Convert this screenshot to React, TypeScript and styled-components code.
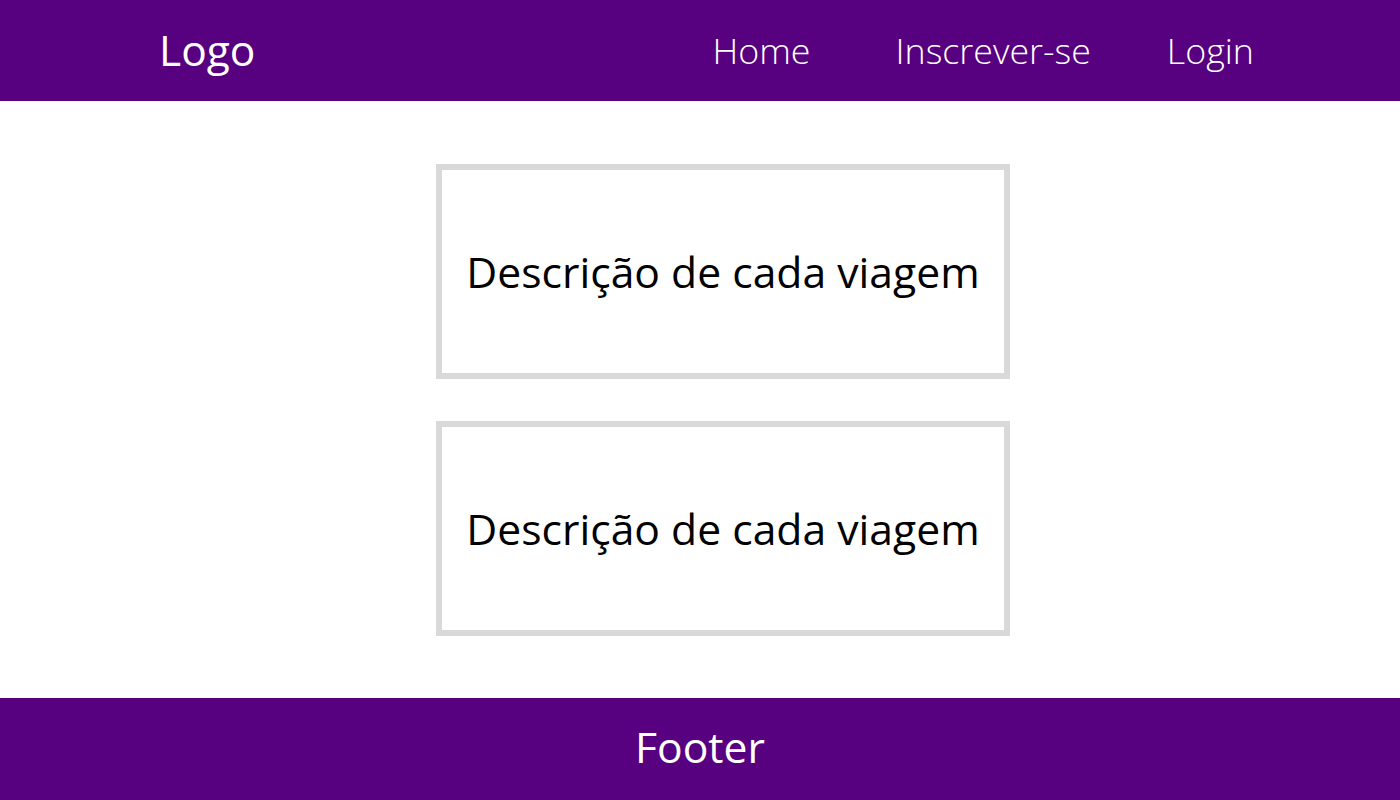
import React from "react";
import styled, { createGlobalStyle } from "styled-components";

const Global = createGlobalStyle`
  html, body { margin: 0; padding: 0; background: #fff; }
  body { font-family: "Open Sans", "Noto Sans", sans-serif; }
  * { box-sizing: border-box; }
`;

const Page = styled.div`
  width: 1400px;
  height: 800px;
  display: flex;
  flex-direction: column;
`;

const Header = styled.header`
  height: 101px;
  background: #570080;
  display: flex;
  align-items: center;
  justify-content: space-between;
  padding: 0 146px 0 159px;
  color: #fff;
`;

const Logo = styled.div`
  font-size: 42.5px;
  font-weight: 400;
  line-height: 1;
`;

const Nav = styled.nav`
  display: flex;
  align-items: center;
`;

const NavLink = styled.a<{ $space?: number }>`
  font-size: 35.8px;
  font-weight: 300;
  line-height: 1;
  color: #fff;
  text-decoration: none;
  margin-left: ${(p) => p.$space ?? 0}px;
`;

const Main = styled.main`
  flex: 1;
  display: flex;
  flex-direction: column;
  gap: 42px;
  padding: 63px 0 0 436px;
`;

const Card = styled.div`
  width: 574px;
  height: 215px;
  border: 6px solid #d9d9d9;
  display: flex;
  align-items: center;
  justify-content: center;
  font-size: 42.67px;
  color: #000;
`;

const Footer = styled.footer`
  height: 102px;
  background: #570080;
  display: flex;
  align-items: center;
  justify-content: center;
  color: #fff;
  font-size: 42.67px;
  padding-bottom: 6px;
`;

export default function App() {
  return (
    <Page>
      <Global />
      <Header>
        <Logo>Logo</Logo>
        <Nav>
          <NavLink>Home</NavLink>
          <NavLink $space={85}>Inscrever-se</NavLink>
          <NavLink $space={76}>Login</NavLink>
        </Nav>
      </Header>
      <Main>
        <Card>Descrição de cada viagem</Card>
        <Card>Descrição de cada viagem</Card>
      </Main>
      <Footer>Footer</Footer>
    </Page>
  );
}
